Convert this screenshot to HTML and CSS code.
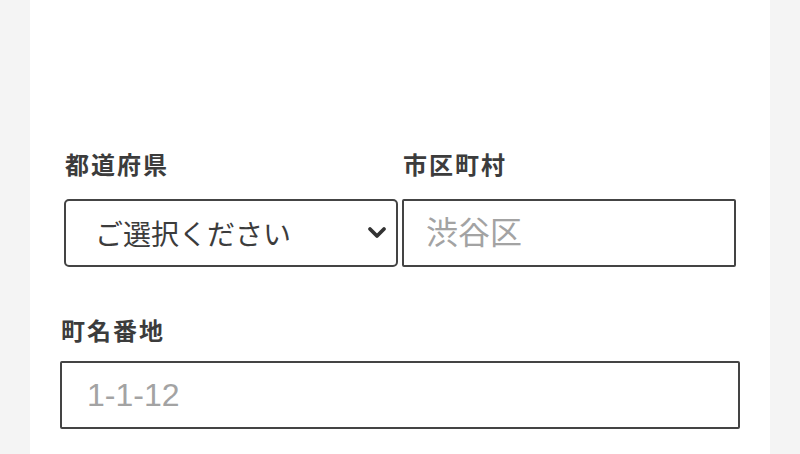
FILE: index.html
```html
<!DOCTYPE html>
<html lang="ja">
<head>
    <meta charset="UTF-8">
    <meta name="viewport" content="width=device-width, initial-scale=1.0">
    <title>住所入力</title>
    <link rel="stylesheet" href="styles.css">
</head>
<body>

<!-- Address form card -->
<div class="card">
    <div class="field-row">
        <div class="field">
            <label class="field-label" for="pref">都道府県</label>
            <div class="select-wrap">
                <select id="pref" class="field-select">
                    <option>ご選択ください</option>
                    <option>東京都</option>
                    <option>大阪府</option>
                </select>
                <svg class="chevron" width="22" height="16" viewBox="0 0 22 16">
                    <path d="M4 4 L11 11 L18 4" fill="none" stroke="#333" stroke-width="3.8" stroke-linecap="round" stroke-linejoin="round"/>
                </svg>
            </div>
        </div>
        <div class="field">
            <label class="field-label" for="city">市区町村</label>
            <input id="city" class="field-input" type="text" placeholder="渋谷区">
        </div>
    </div>

    <div class="field field-wide">
        <label class="field-label" for="town">町名番地</label>
        <input id="town" class="field-input" type="text" placeholder="1-1-12">
    </div>
</div>

</body>
</html>
```

FILE: styles.css
```css
* {
    box-sizing: border-box;
}
body {
    margin: 0;
    background-color: #f4f4f4;
    font-family: "Liberation Sans", "Noto Sans CJK JP", sans-serif;
    color: #3c3c3c;
}
.card {
    margin: 0 30px;
    padding: 146px 30px 40px;
    min-height: 100vh;
    background-color: #fff;
}
.field-row {
    display: flex;
    gap: 4px;
    padding: 0 4px;
    margin-bottom: 45px;
}
.field {
    flex: 1;
    min-width: 0;
}
.field-label {
    display: block;
    margin: 0 0 17px 1px;
    font-family: "Noto Sans CJK JP", sans-serif;
    font-size: 24px;
    font-weight: bold;
    line-height: 36px;
    letter-spacing: 2px;
    color: #3c3c3c;
}
.field-wide .field-label {
    margin-bottom: 13px;
}
.select-wrap {
    position: relative;
}
.field-select,
.field-input {
    display: block;
    width: 100%;
    height: 68px;
    margin: 0;
    border: 2px solid #444;
    background-color: #fff;
    color: #3c3c3c;
    outline: none;
}
.field-select {
    appearance: none;
    -webkit-appearance: none;
    padding: 0 40px 0 29px;
    border-radius: 5px;
    font-family: "Noto Sans CJK JP", sans-serif;
    font-size: 28px;
}
.chevron {
    position: absolute;
    right: 10px;
    top: 26px;
    pointer-events: none;
}
.field-input {
    padding: 0 22px;
    border-radius: 2px;
    font-family: "Liberation Sans", "Noto Sans CJK JP", sans-serif;
    font-size: 32px;
}
.field-wide .field-input {
    padding-left: 25px;
}
.field-input::placeholder {
    color: #a3a3a3;
}
```
